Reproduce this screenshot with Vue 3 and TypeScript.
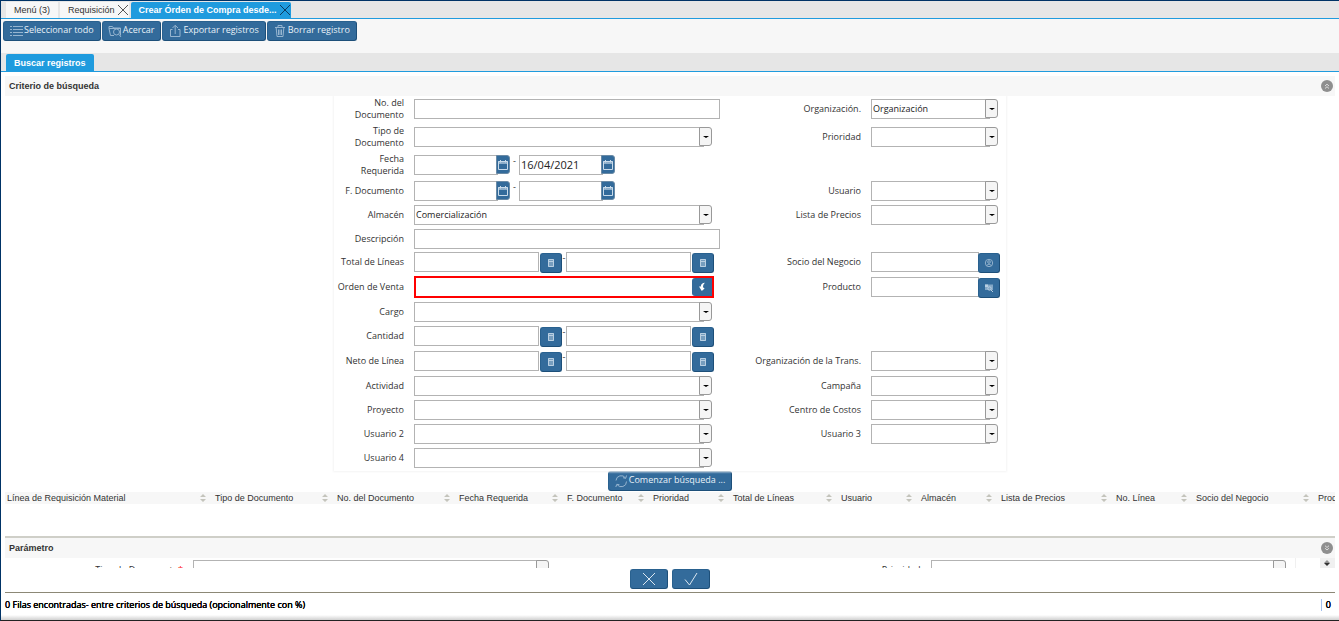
<script setup lang="ts">
import { ref } from 'vue'

type Kind = 'text' | 'combo' | 'date' | 'amount' | 'lookup' | 'order'
interface Field {
  id: string
  label: string
  kind: Kind
  value?: string
  valueTo?: string
  icon?: 'partner' | 'product'
}
interface Row {
  size: 'tall' | 'range' | 'normal' | 'short' | 'wide'
  left: Field
  right?: Field
}

const rows = ref<Row[]>([
  { size: 'tall', left: { id: 'docno', label: 'No. del Documento', kind: 'text' }, right: { id: 'org', label: 'Organización.', kind: 'combo', value: 'Organización' } },
  { size: 'tall', left: { id: 'doctype', label: 'Tipo de Documento', kind: 'combo' }, right: { id: 'priority', label: 'Prioridad', kind: 'combo' } },
  { size: 'range', left: { id: 'required', label: 'Fecha Requerida', kind: 'date', valueTo: '16/04/2021' } },
  { size: 'normal', left: { id: 'docdate', label: 'F. Documento', kind: 'date' }, right: { id: 'user', label: 'Usuario', kind: 'combo' } },
  { size: 'normal', left: { id: 'warehouse', label: 'Almacén', kind: 'combo', value: 'Comercialización' }, right: { id: 'pricelist', label: 'Lista de Precios', kind: 'combo' } },
  { size: 'short', left: { id: 'description', label: 'Descripción', kind: 'text' } },
  { size: 'wide', left: { id: 'total', label: 'Total de Líneas', kind: 'amount' }, right: { id: 'partner', label: 'Socio del Negocio', kind: 'lookup', icon: 'partner' } },
  { size: 'wide', left: { id: 'order', label: 'Orden de Venta', kind: 'order' }, right: { id: 'product', label: 'Producto', kind: 'lookup', icon: 'product' } },
  { size: 'normal', left: { id: 'charge', label: 'Cargo', kind: 'combo' } },
  { size: 'wide', left: { id: 'quantity', label: 'Cantidad', kind: 'amount' } },
  { size: 'wide', left: { id: 'linenet', label: 'Neto de Línea', kind: 'amount' }, right: { id: 'trxorg', label: 'Organización de la Trans.', kind: 'combo' } },
  { size: 'normal', left: { id: 'activity', label: 'Actividad', kind: 'combo' }, right: { id: 'campaign', label: 'Campaña', kind: 'combo' } },
  { size: 'normal', left: { id: 'project', label: 'Proyecto', kind: 'combo' }, right: { id: 'costcenter', label: 'Centro de Costos', kind: 'combo' } },
  { size: 'normal', left: { id: 'user2', label: 'Usuario 2', kind: 'combo' }, right: { id: 'user3', label: 'Usuario 3', kind: 'combo' } },
  { size: 'normal', left: { id: 'user4', label: 'Usuario 4', kind: 'combo' } },
])

const sides = (row: Row): { side: string; field?: Field }[] => [
  { side: 'main', field: row.left },
  { side: 'extra', field: row.right },
]

const columns = [
  { title: 'Línea de Requisición Material', width: 208 },
  { title: 'Tipo de Documento', width: 122 },
  { title: 'No. del Documento', width: 122 },
  { title: 'Fecha Requerida', width: 108 },
  { title: 'F. Documento', width: 86 },
  { title: 'Prioridad', width: 80 },
  { title: 'Total de Líneas', width: 108 },
  { title: 'Usuario', width: 80 },
  { title: 'Almacén', width: 80 },
  { title: 'Lista de Precios', width: 115 },
  { title: 'No. Línea', width: 80 },
  { title: 'Socio del Negocio', width: 122 },
  { title: 'Producto', width: 100 },
]
</script>

<template>
  <div class="window">
    <nav class="tabs">
      <button type="button" class="tab tab-menu">Menú (3)</button>
      <div class="tab tab-closable">
        <button type="button" class="tab-name">Requisición</button>
        <button type="button" class="tab-close" aria-label="Cerrar Requisición">
          <svg viewBox="0 0 12 12"><path d="M1 1L11 11M11 1L1 11" /></svg>
        </button>
      </div>
      <div class="tab tab-closable active">
        <button type="button" class="tab-name">Crear Órden de Compra desde...</button>
        <button type="button" class="tab-close" aria-label="Cerrar Crear Órden de Compra">
          <svg viewBox="0 0 12 12"><path d="M1 1L11 11M11 1L1 11" /></svg>
        </button>
      </div>
    </nav>

    <div class="toolbar">
      <button type="button" class="btn">
        <svg viewBox="0 0 14 14"><path d="M1 2.500h2M1 5.500h2M1 8.500h2M1 11.500h2M4 2.500h10M4 5.500h10M4 8.500h10M4 11.500h10" /></svg>
        Seleccionar todo
      </button>
      <button type="button" class="btn">
        <svg viewBox="0 0 14 14"><path d="M6 11.500H2.500L1 4.500V2.500H4.500L5.500 4H12.500V11.500M1 4.500H12.500M11 10.500l2 2.500" /><circle cx="8.500" cy="8" r="3" /></svg>
        Acercar
      </button>
      <button type="button" class="btn">
        <svg viewBox="0 0 14 14"><path d="M4.500 5.500H2.500V12.500H12V5.500H10M7.200 10V1.500M4.500 4L7.200 1.300L10 4" /></svg>
        Exportar registros
      </button>
      <button type="button" class="btn">
        <svg viewBox="0 0 14 14"><path d="M2 3.500H12M5 3V1.500H9V3M3.200 4L4 12.500H10L10.800 4M5.500 5.500V11M7 5.500V11M8.500 5.500V11" /></svg>
        Borrar registro
      </button>
    </div>

    <div class="subtabs"><button type="button" class="subtab">Buscar registros</button></div>

    <header class="section first">
      <h2>Criterio de búsqueda</h2>
      <button type="button" class="collapse" aria-label="Contraer">
        <svg viewBox="0 0 12 12"><path d="M4 6L6 4.200L8 6M4 8.500L6 6.700L8 8.500" /></svg>
      </button>
    </header>

    <form class="criteria" @submit.prevent>
      <div class="panel">
        <div v-for="row in rows" :key="row.left.id" class="row" :class="row.size">
          <template v-for="{ side, field } in sides(row)" :key="side">
            <template v-if="field">
              <label :for="field.id" :class="side"><span>{{ field.label }}</span></label>
              <div class="field" :class="[side, field.kind]">
                <input v-if="field.kind === 'text'" :id="field.id" v-model="field.value" type="text" class="box" />

                <template v-else-if="field.kind === 'combo'">
                  <select :id="field.id" class="box">
                    <option>{{ field.value ?? '' }}</option>
                  </select>
                  <span class="drop"></span>
                </template>

                <template v-else-if="field.kind === 'date'">
                  <input :id="field.id" type="text" class="box" />
                  <button type="button" class="cal" aria-label="Calendario">
                    <svg viewBox="0 0 12 12"><path d="M1.500 2.500H10.500V10.500H1.500ZM3.500 1V3.500M8.500 1V3.500" /><path class="solid" d="M1 2H11V5H1Z" opacity=".6" /></svg>
                  </button>
                  <span class="dash">-</span>
                  <input v-model="field.valueTo" type="text" class="box" :aria-label="field.label + ' hasta'" />
                  <button type="button" class="cal" aria-label="Calendario">
                    <svg viewBox="0 0 12 12"><path d="M1.500 2.500H10.500V10.500H1.500ZM3.500 1V3.500M8.500 1V3.500" /><path class="solid" d="M1 2H11V5H1Z" opacity=".6" /></svg>
                  </button>
                </template>

                <template v-else-if="field.kind === 'amount'">
                  <input :id="field.id" type="text" class="box" />
                  <button type="button" class="pick" aria-label="Calculadora">
                    <svg viewBox="0 0 10 10"><path class="solid" d="M2 1H8V9H2Z" opacity=".5" /><path d="M2.500 1.500H7.500V8.500H2.500Z" /><path d="M3 3.500H7" /></svg>
                  </button>
                  <span class="dash">-</span>
                  <input type="text" class="box" :aria-label="field.label + ' hasta'" />
                  <button type="button" class="pick" aria-label="Calculadora">
                    <svg viewBox="0 0 10 10"><path class="solid" d="M2 1H8V9H2Z" opacity=".5" /><path d="M2.500 1.500H7.500V8.500H2.500Z" /><path d="M3 3.500H7" /></svg>
                  </button>
                </template>

                <template v-else>
                  <input :id="field.id" type="text" class="box" />
                  <button type="button" class="pick" :aria-label="'Buscar ' + field.label">
                    <svg v-if="field.icon === 'partner'" viewBox="0 0 10 10" opacity=".7"><circle cx="5" cy="5" r="3.700" /><circle cx="5" cy="4" r="1.300" /><path d="M2.500 7.500Q5 4.500 7.500 7.500" /></svg>
                    <svg v-else-if="field.icon === 'product'" viewBox="0 0 10 10"><path class="solid" d="M1 1.500H9V7H1Z" opacity=".6" /><path class="solid" d="M1 1.500H4V4H1Z" /><circle cx="5.500" cy="5.500" r="1.700" /><path d="M7 7L9 9" /></svg>
                    <svg v-else viewBox="0 0 10 10"><path class="solid" d="M8 .8C5.500 1 4 2 3.800 4.500H2L4.800 9L7.600 6.500L6 5.200C6 3.500 6.500 2.200 8 .8Z" /></svg>
                  </button>
                </template>
              </div>
            </template>
          </template>
        </div>
      </div>
      <button type="submit" class="btn search">
        <svg viewBox="0 0 14 14"><path d="M2 6.500A5.200 5.200 0 0 1 11.500 4M12.500 1.500L11.700 4.300L9 3.700M12.500 7.500A5.200 5.200 0 0 1 3 10.500M1.800 13L2.800 10.300L5.500 10.800" /></svg>
        Comenzar búsqueda ...
      </button>
    </form>

    <div class="results">
      <table>
        <colgroup><col v-for="c in columns" :key="c.title" :style="{ width: c.width + 'px' }" /></colgroup>
        <thead>
          <tr>
            <th v-for="c in columns" :key="c.title" scope="col">
              <div class="head">
                {{ c.title }}
                <svg viewBox="0 0 6 8"><path d="M0 3L3 0L6 3ZM0 5H6L3 8Z" /></svg>
              </div>
            </th>
          </tr>
        </thead>
      </table>
    </div>

    <header class="section">
      <h2>Parámetro</h2>
      <button type="button" class="collapse" aria-label="Expandir">
        <svg viewBox="0 0 12 12"><path d="M4 3.700L6 5.500L8 3.700M4 6.200L6 8L8 6.200" /></svg>
      </button>
    </header>

    <div class="params">
      <div class="params-form">
        <label for="p-doctype">Tipo de Documento<i>*</i></label>
        <div class="field combo"><select id="p-doctype" class="box"></select><span class="drop"></span></div>
        <label for="p-priority">Prioridad</label>
        <div class="field combo"><select id="p-priority" class="box"></select><span class="drop"></span></div>
      </div>
      <div class="scroll"><svg viewBox="0 0 6 8"><path d="M0 4L3 1L6 4Z" opacity=".5" /><path d="M0 4H6L3 7Z" /></svg></div>
    </div>

    <div class="actions">
      <button type="button" class="btn" aria-label="Cancelar"><svg viewBox="0 0 14 14"><path d="M1 1L13 13M13 1L1 13" /></svg></button>
      <button type="button" class="btn" aria-label="Aceptar"><svg viewBox="0 0 14 14"><path d="M1 7.500L5.500 13L13 1" /></svg></button>
    </div>

    <footer class="status">
      <span>0 Filas encontradas- entre criterios de búsqueda (opcionalmente con %)</span>
      <span class="count">0</span>
    </footer>
  </div>
</template>

<style>
body {
  margin: 0;
  background: #fff;
}
</style>

<style scoped>
* {
  box-sizing: border-box;
}
.window {
  display: flex;
  flex-direction: column;
  min-height: 100vh;
  border: 1px solid #003366;
  border-right: 0;
  border-bottom-color: #222;
  overflow: hidden;
  color: #333;
  font: 9px/12px "Open Sans", "Noto Sans", sans-serif;
}
button,
input,
select {
  margin: 0;
  padding: 0;
  border: 0;
  border-radius: 0;
  background: none;
  color: inherit;
  font: inherit;
}
svg {
  display: block;
  flex: none;
  fill: none;
  stroke: currentColor;
  stroke-width: 1;
}

/* window tabs */
.tabs {
  display: flex;
  gap: 2px;
  height: 18px;
  padding: 1px 0 0 5px;
  background: #e6e6e6;
  border-bottom: 1px solid #1f9bde;
  font-family: "Liberation Sans", sans-serif;
}
.tab {
  display: flex;
  align-items: center;
  background: #f7f7f7;
}
.tab-menu {
  padding: 0 8px;
}
.tab-closable {
  padding-left: 8px;
  gap: 2px;
}
.tab-close svg {
  width: 12px;
  height: 12px;
  color: #555;
}
.active {
  background: #1f9bde;
  border-radius: 2px 2px 0 0;
  color: #fff;
  font-weight: bold;
}
.active .tab-close svg {
  color: #0b3c61;
}

/* toolbar */
.toolbar {
  display: flex;
  gap: 1px;
  height: 34px;
  padding: 2px;
  background: #f7f7f7;
}
.btn {
  display: flex;
  align-items: center;
  justify-content: center;
  gap: 1px;
  height: 20px;
  padding: 0 6px 2px 5px;
  background: #336b9b;
  border: 1px solid #29618f;
  border-right-color: #1d4f79;
  border-bottom-color: #1d4f79;
  border-radius: 3px;
  color: #e8f1f8;
  white-space: nowrap;
}
.btn svg {
  width: 14px;
  height: 14px;
  margin-top: 2px;
  color: #96b5d0;
}

/* inner tabs */
.subtabs {
  display: flex;
  height: 19px;
  padding: 1px 0 0 5px;
  background: #e6e6e6;
  border-bottom: 1px solid #1f9bde;
}
.subtab {
  padding: 0 8px;
  background: #1f9bde;
  border-radius: 2px 2px 0 0;
  color: #fff;
  font: bold 9px/12px "Liberation Sans", sans-serif;
}

.section {
  display: flex;
  align-items: center;
  justify-content: space-between;
  height: 20px;
  margin: 0 4px;
  padding: 0 2px 0 4px;
  background: #f7f7f7;
}
.first {
  margin-top: 4px;
}
.section h2 {
  margin: 0;
  font: bold 9px/12px "Liberation Sans", sans-serif;
}
.collapse svg {
  width: 12px;
  height: 12px;
  border-radius: 50%;
  background: #8f8f8f;
  color: #ddd;
}

/* search form */
.criteria {
  display: flex;
  flex-direction: column;
  align-items: center;
}
.panel {
  width: 50%;
  min-width: 672px;
  padding: 2px 6px 0 0;
  box-shadow: 0 0 2px 1px #f4f4f4;
  clip-path: inset(0 -4px -4px -4px);
}
.row {
  display: grid;
  grid-template-columns: 70px minmax(0, 306fr) 131px minmax(0, 129fr);
  column-gap: 10px;
  padding-top: 1px;
}
.tall {
  height: 28px;
}
.range {
  height: 26px;
}
.normal {
  height: 24px;
}
.short {
  height: 23px;
}
.wide {
  height: 25px;
}
.row label {
  display: flex;
  align-items: center;
  justify-content: flex-end;
  height: 20px;
  padding-left: 2px;
  text-align: right;
}
label.main {
  grid-column: 1;
}
label.extra {
  grid-column: 3;
}
.field {
  display: flex;
  align-items: flex-start;
  height: 20px;
}
.box {
  flex: 1;
  min-width: 0;
  height: 20px;
  padding: 0 1px;
  background: #fff;
  border: 1px solid #b3b3b3;
  color: #222;
  appearance: none;
}
.drop {
  display: flex;
  align-items: center;
  justify-content: center;
  width: 13px;
  height: 19px;
  margin-left: -5px;
  background: #f5f5f5;
  border: 1px solid #999;
  border-radius: 0 3px 3px 0;
  pointer-events: none;
}
.drop::after {
  content: "";
  border: solid transparent;
  border-width: 2px 3px 0;
  border-top-color: #000;
}
.main.combo {
  margin-right: 8px;
}
.extra.combo {
  margin-right: 2px;
}
.date .box {
  flex: none;
  width: 84px;
  padding-bottom: 2px;
  font-size: 11px;
}
.cal {
  display: flex;
  align-items: center;
  justify-content: center;
  width: 14px;
  height: 19px;
  margin-left: -2px;
  background: #336b9b;
  border: 1px solid #6a8aa5;
  border-radius: 0 3px 3px 0;
  color: #c9dbea;
}
.cal svg {
  width: 12px;
  height: 12px;
}
.dash {
  width: 9px;
  text-align: center;
}
.amount {
  margin-right: 6px;
}
.amount .dash {
  width: 4px;
}
.pick {
  display: flex;
  align-items: center;
  justify-content: center;
  width: 22px;
  height: 20px;
  margin: 1px 0 0 1px;
  background: #336b9b;
  border: 1px solid #29618f;
  border-right-color: #1d4f79;
  border-bottom-color: #1d4f79;
  border-radius: 3px;
  color: #b9cfe2;
}
.pick svg {
  width: 10px;
  height: 10px;
}
.solid {
  fill: currentColor;
  stroke: none;
}
.lookup .pick {
  margin-left: -1px;
}
.order {
  height: 22px;
  margin: -1px 6px 0 0;
  border: 2px solid #f00;
}
.order .box {
  height: 18px;
  border: 0;
}
.order .pick {
  width: 20px;
  height: 18px;
  margin: 0;
  border: 0;
  border-radius: 3px 0 0 3px;
  color: #fff;
}
.search {
  width: 124px;
}

/* results */
.results {
  flex: 1;
  min-height: 46px;
  margin: 1px 4px 0;
  overflow: hidden;
  border-bottom: 2px solid #cfcfc8;
}
table {
  width: 1411px;
  table-layout: fixed;
  border-collapse: collapse;
}
th {
  height: 12px;
  padding: 0 7px 0 2px;
  background: #f7f7f7;
  font: 9px/12px "Liberation Sans", sans-serif;
  text-align: left;
  white-space: nowrap;
}
.head {
  display: flex;
  align-items: center;
  justify-content: space-between;
}
.head svg {
  width: 6px;
  height: 8px;
  fill: #c4c4bc;
  stroke: none;
}

/* parameters */
.params {
  display: flex;
  height: 10px;
  margin: 0 4px;
  overflow: hidden;
}
.params-form {
  flex: 1;
  display: grid;
  grid-template-columns: 178px minmax(0, 356fr) 362px minmax(0, 356fr);
  column-gap: 10px;
  padding: 2px 9px 0 0;
  margin-right: 24px;
  border-right: 1px solid #f0f0f0;
}
.params-form label {
  height: 20px;
  padding-top: 4px;
  text-align: right;
}
.params-form i {
  color: #f00;
  font-style: normal;
}
.scroll {
  width: 15px;
  padding: 1px 4px;
  background: #f0f0f0;
}
.scroll svg {
  width: 6px;
  height: 8px;
  fill: #333;
  stroke: none;
}

.actions {
  display: flex;
  justify-content: center;
  gap: 4px;
  height: 25px;
  margin: 0 4px;
  padding-top: 1px;
  border-bottom: 1px solid #8c8876;
}
.actions .btn {
  width: 38px;
}
.actions svg {
  color: #dbe7f1;
}

.status {
  display: flex;
  align-items: center;
  justify-content: space-between;
  height: 27px;
  padding: 0 8px 4px 4px;
  background: linear-gradient(#fff 22px, #d0d0d0);
  color: #000;
  font-weight: 500;
  text-shadow: 0 0 0 #000, 0 0 0 #000;
}
.count {
  padding-left: 4px;
  border-left: 1px solid #a3bfee;
}
</style>
